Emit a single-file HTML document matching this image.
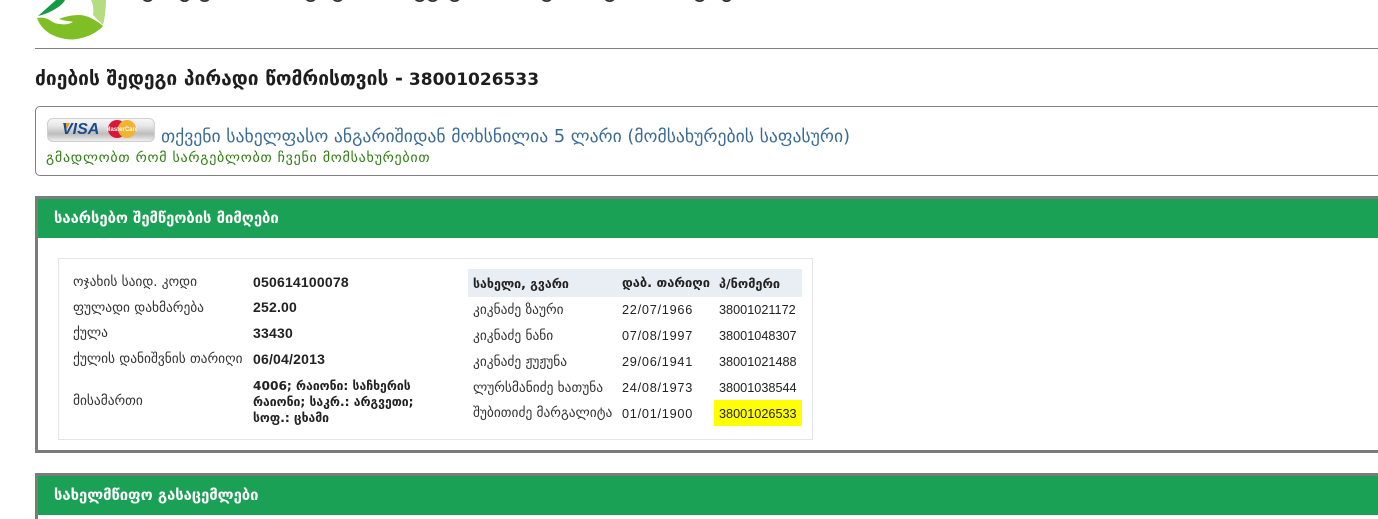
<!DOCTYPE html>
<html><head><meta charset="utf-8">
<style>
html,body{margin:0;padding:0;background:#fff;width:1378px;height:519px;overflow:hidden}
body{position:relative;font-family:"DejaVu Sans","Liberation Sans",sans-serif;color:#222}
.a{position:absolute;white-space:nowrap;line-height:16px}
.l{font-size:13.4px;color:#333;left:73px}
.v{font-family:"Liberation Sans",sans-serif;font-size:14px;letter-spacing:.2px;font-weight:bold;color:#222;left:253px}
.ad{font-family:"DejaVu Sans",sans-serif;font-size:12.2px;letter-spacing:0}
.n{font-size:13.4px;color:#333;left:473px}
.d{font-family:"Liberation Sans",sans-serif;font-size:12.7px;letter-spacing:.75px;color:#222;left:622px}
.c{font-family:"Liberation Sans",sans-serif;font-size:12.7px;color:#222;left:719px}
.h{font-weight:bold;color:#222}
.box{position:absolute;box-sizing:border-box}
.gt{font-size:14.8px;font-weight:bold;color:#fff;left:54px}
.t{position:absolute;top:-27px;font-size:26px;line-height:30px;color:#333}
</style></head><body>
<svg class="box" style="left:36px;top:0" width="76" height="42" viewBox="0 0 76 42">
<path d="M2 16 L20 0 L29 0 C27 5 15 13 2 16Z" fill="#159a45"/>
<path d="M1 18 C6 17 9 18 12 19 C16 22 20 24 24 24 C29 25 33 24 37 22 C34 21 28 21 23 19 C28 17 35 15 43 15 C50 15 59 19 67 26 C60 34 47 39 36 39.500 C20 39 6 32 1 18Z" fill="#7fbf25"/>
<path d="M55 0 L70 0 C70 8 69 17 67 25 C63 21 60 18 57 15 C58 9 57 4 55 0Z" fill="#b5dc80"/>
</svg>
<div class="t" style="left:140px">გ</div><div class="t" style="left:178px">ქ</div><div class="t" style="left:197px">გ</div><div class="t" style="left:303px">გ</div><div class="t" style="left:330px">გ</div><div class="t" style="left:412px">გ</div><div class="t" style="left:425px">გ</div><div class="t" style="left:447px">გ</div><div class="t" style="left:539px">გ</div><div class="t" style="left:602px">გ</div><div class="t" style="left:692px">გ</div><div class="t" style="left:720px">ქ</div>
<div class="box" style="left:35px;top:48px;width:1343px;height:1px;background:#808080"></div>
<div class="a" style="left:35px;top:69px;font-size:17px;line-height:20px;font-weight:bold;color:#1d1d1d"><span style="font-size:19.2px">ძიების შედეგი პირადი წომრისთვის -</span> 38001026533</div>
<div class="box" style="left:35px;top:106px;width:1360px;height:70px;border:1px solid #808080;border-radius:5px"></div>
<div class="box" style="left:47px;top:118px;width:108px;height:24px;border:1px solid #d0d0d0;border-radius:6px;background:linear-gradient(#f6f6f6,#e8e8e8 30%,#bdbdbd 68%,#efefef)"></div>
<svg class="box" style="left:60px;top:122px" width="12" height="8" viewBox="0 0 12 8"><path d="M2 1 L10 1 L7 7 C6 4 4 2 2 1Z" fill="#e8a020"/></svg>
<div class="a" style="left:62px;top:122px;font-family:'Liberation Sans',sans-serif;font-size:16px;font-weight:bold;font-style:italic;color:#1b4a8a">VISA</div>
<svg class="box" style="left:107px;top:119px" width="30" height="20" viewBox="0 0 30 20"><circle cx="10" cy="10" r="9" fill="#d8173a"/><circle cx="20" cy="10" r="9" fill="#f2b233"/><text x="15" y="12" text-anchor="middle" font-family="Liberation Sans" font-size="6" font-weight="bold" fill="#fff">MasterCard</text></svg>
<div class="a" style="left:161px;top:127px;font-size:17.7px;line-height:20px;color:#3b6b95">თქვენი სახელფასო ანგარიშიდან მოხსნილია 5 ლარი (მომსახურების საფასური)</div>
<div class="a" style="left:46px;top:150px;font-size:14px;letter-spacing:.75px;color:#2e7d12">გმადლობთ რომ სარგებლობთ ჩვენი მომსახურებით</div>

<div class="box" style="left:35px;top:196px;width:1360px;height:257px;border:3px solid #7b7b7b"></div>
<div class="box" style="left:38px;top:199px;width:1340px;height:39px;background:#1ba155"></div>
<div class="a gt" style="top:211px">საარსებო შემწეობის მიმღები</div>
<div class="box" style="left:58px;top:258px;width:755px;height:182px;border:1px solid #e5e5e5"></div>

<div class="a l" style="top:275px">ოჯახის საიდ. კოდი</div><div class="a v" style="top:274px">050614100078</div>
<div class="a l" style="top:301px">ფულადი დახმარება</div><div class="a v" style="top:299px">252.00</div>
<div class="a l" style="top:326px">ქულა</div><div class="a v" style="top:325px">33430</div>
<div class="a l" style="top:352px">ქულის დანიშვნის თარიღი</div><div class="a v" style="top:351px">06/04/2013</div>
<div class="a l" style="top:394px">მისამართი</div>
<div class="a v ad" style="top:378px">4006; რაიონი: საჩხერის</div>
<div class="a v ad" style="top:394px">რაიონი; საკრ.: არგვეთი;</div>
<div class="a v ad" style="top:410px">სოფ.: ცხამი</div>

<div class="box" style="left:468px;top:269px;width:334px;height:28px;background:#e9edf4"></div>
<div class="box" style="left:714px;top:400px;width:88px;height:26px;background:#ffff00"></div>
<div class="a h" style="left:473px;top:276px;font-size:12.4px">სახელი, გვარი</div>
<div class="a h" style="left:622px;top:276px;font-size:12.9px">დაბ. თარიღი</div>
<div class="a h" style="left:719px;top:276px;font-size:12.7px">პ/ნომერი</div>
<div class="a n" style="top:303px">კიკნაძე ზაური</div><div class="a d" style="top:302px">22/07/1966</div><div class="a c" style="top:302px">38001021172</div>
<div class="a n" style="top:329px">კიკნაძე ნანი</div><div class="a d" style="top:328px">07/08/1997</div><div class="a c" style="top:328px">38001048307</div>
<div class="a n" style="top:355px">კიკნაძე ჟუჟუნა</div><div class="a d" style="top:354px">29/06/1941</div><div class="a c" style="top:354px">38001021488</div>
<div class="a n" style="top:381px">ლურსმანიძე ხათუნა</div><div class="a d" style="top:380px">24/08/1973</div><div class="a c" style="top:380px">38001038544</div>
<div class="a n" style="top:406px">შუბითიძე მარგალიტა</div><div class="a d" style="top:406px">01/01/1900</div><div class="a c" style="top:406px">38001026533</div>

<div class="box" style="left:35px;top:473px;width:1360px;height:60px;border:3px solid #7b7b7b"></div>
<div class="box" style="left:38px;top:476px;width:1340px;height:39px;background:#1ba155"></div>
<div class="a gt" style="top:488px">სახელმწიფო გასაცემლები</div>
</body></html>
